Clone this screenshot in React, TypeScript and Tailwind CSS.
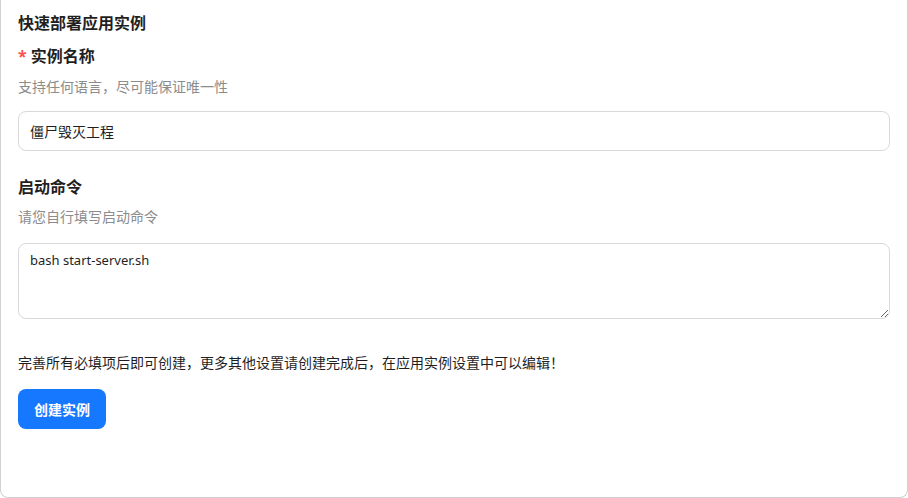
import React, { useState } from "react";

const font = { fontFamily: '"Noto Sans", "Noto Sans CJK SC", sans-serif' };

const App = () => {
	const [name, setName] = useState("僵尸毁灭工程");
	const [command, setCommand] = useState("bash start-server.sh");

	return (
		<div
			className="h-[498px] w-[908px] overflow-hidden bg-white"
			style={font}
		>
			<div className="h-full border border-t-0 border-[#d0d0d0] rounded-b-lg pl-[17px] pr-[17px] pt-[11px]">
				<h2 className="text-[16px] font-bold text-[#1f1f1f] leading-[24px]">
					快速部署应用实例
				</h2>

				<div className="mt-[9px] flex items-center text-[16px] font-bold text-[#1f1f1f] leading-[24px]">
					<span className="text-[#ff4d4f] mr-[4px]">*</span>
					实例名称
				</div>
				<p className="mt-[8px] text-[14px] text-[#8c8c8c] leading-[22px]">
					支持任何语言，尽可能保证唯一性
				</p>
				<input
					className="mt-[13px] block w-full h-[40px] px-[11px] text-[14px] text-[#1f1f1f] border border-[#d9d9d9] rounded-lg outline-none"
					value={name}
					onChange={e => setName(e.target.value)}
				/>

				<div className="mt-[24px] text-[16px] font-bold text-[#1f1f1f] leading-[24px]">
					启动命令
				</div>
				<p className="mt-[7px] text-[14px] text-[#8c8c8c] leading-[22px]">
					请您自行填写启动命令
				</p>
				<textarea
					className="mt-[15px] block w-full h-[76px] px-[11px] py-[6px] text-[13px] leading-[20px] text-[#1f1f1f] border border-[#d9d9d9] rounded-lg outline-none"
					value={command}
					onChange={e => setCommand(e.target.value)}
				/>

				<p className="mt-[33px] text-[14px] text-[#1f1f1f] leading-[22px]">
					完善所有必填项后即可创建，更多其他设置请创建完成后，在应用实例设置中可以编辑！
				</p>

				<button
					type="button"
					className="mt-[15px] h-[40px] w-[88px] rounded-lg bg-[#1677ff] text-white text-[14px] font-bold"
				>
					创建实例
				</button>
			</div>
		</div>
	);
};

export default App;
